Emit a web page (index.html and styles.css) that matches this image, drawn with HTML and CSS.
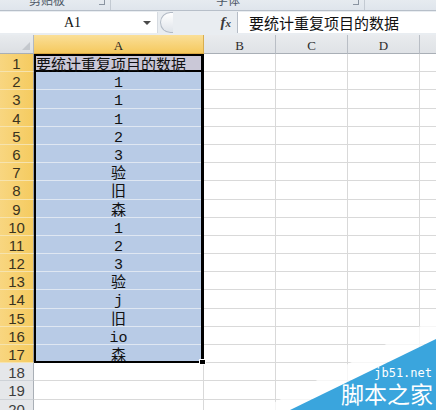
FILE: index.html
```html
<!DOCTYPE html>
<html>
<head>
<meta charset="utf-8">
<link rel="stylesheet" href="styles.css">
</head>
<body>
<div class="app">
  <div class="ribbon">
    <div class="rgroup g1"><span class="rlabel">剪贴板</span><span class="launch"></span></div>
    <div class="rgroup g2"><span class="rlabel">字体</span><span class="launch"></span></div>
    <div class="rgroup g3"></div>
  </div>
  <div class="fbar">
    <div class="namebox"><span class="nm">A1</span><span class="dd"></span></div>
    <div class="knob"></div>
    <div class="fxarea"><span class="fx">f<span class="fxx">x</span></span></div>
    <div class="finput">要统计重复项目的数据</div>
  </div>
  <div class="sheet">
    <div class="corner"><span class="tri"></span></div><div class="ch hs">A</div><div class="ch">B</div><div class="ch">C</div><div class="ch">D</div><div class="ch last"></div>

    <div class="rh hs">1</div><div class="c a1">要统计重复项目的数据</div><div class="c"></div><div class="c"></div><div class="c"></div><div class="c last"></div>
    <div class="rh hs">2</div><div class="c s">1</div><div class="c"></div><div class="c"></div><div class="c"></div><div class="c last"></div>
    <div class="rh hs">3</div><div class="c s">1</div><div class="c"></div><div class="c"></div><div class="c"></div><div class="c last"></div>
    <div class="rh hs">4</div><div class="c s">1</div><div class="c"></div><div class="c"></div><div class="c"></div><div class="c last"></div>
    <div class="rh hs">5</div><div class="c s">2</div><div class="c"></div><div class="c"></div><div class="c"></div><div class="c last"></div>
    <div class="rh hs">6</div><div class="c s">3</div><div class="c"></div><div class="c"></div><div class="c"></div><div class="c last"></div>
    <div class="rh hs">7</div><div class="c s">验</div><div class="c"></div><div class="c"></div><div class="c"></div><div class="c last"></div>
    <div class="rh hs">8</div><div class="c s">旧</div><div class="c"></div><div class="c"></div><div class="c"></div><div class="c last"></div>
    <div class="rh hs">9</div><div class="c s">森</div><div class="c"></div><div class="c"></div><div class="c"></div><div class="c last"></div>
    <div class="rh hs">10</div><div class="c s">1</div><div class="c"></div><div class="c"></div><div class="c"></div><div class="c last"></div>
    <div class="rh hs">11</div><div class="c s">2</div><div class="c"></div><div class="c"></div><div class="c"></div><div class="c last"></div>
    <div class="rh hs">12</div><div class="c s">3</div><div class="c"></div><div class="c"></div><div class="c"></div><div class="c last"></div>
    <div class="rh hs">13</div><div class="c s">验</div><div class="c"></div><div class="c"></div><div class="c"></div><div class="c last"></div>
    <div class="rh hs">14</div><div class="c s">j</div><div class="c"></div><div class="c"></div><div class="c"></div><div class="c last"></div>
    <div class="rh hs">15</div><div class="c s">旧</div><div class="c"></div><div class="c"></div><div class="c"></div><div class="c last"></div>
    <div class="rh hs">16</div><div class="c s">io</div><div class="c"></div><div class="c"></div><div class="c"></div><div class="c last"></div>
    <div class="rh hs">17</div><div class="c s">森</div><div class="c"></div><div class="c"></div><div class="c"></div><div class="c last"></div>
    <div class="rh">18</div><div class="c"></div><div class="c"></div><div class="c"></div><div class="c"></div><div class="c last"></div>
    <div class="rh">19</div><div class="c"></div><div class="c"></div><div class="c"></div><div class="c"></div><div class="c last"></div>
    <div class="rh">20</div><div class="c"></div><div class="c"></div><div class="c"></div><div class="c"></div><div class="c last"></div>

    <div class="selbox"><span class="handle"></span></div>
  </div>

  <div class="wm">
    <svg class="wmsvg" width="200" height="100" viewBox="0 0 200 100">
      <polygon points="24,100 54,100 200,29 200,8" fill="#ffffff" fill-opacity="0.75"/>
      <polygon points="54,100 200,100 200,29" fill="#3aa5dd"/>
    </svg>
    <span class="wm1">jb51.net</span>
    <span class="wm2">脚本之家</span>
  </div>
</div>
</body>
</html>
```

FILE: styles.css
```css
* {
  box-sizing: border-box;
  margin: 0;
  padding: 0;
}

body {
  margin: 0;
  width: 436px;
  height: 410px;
  overflow: hidden;
  background: #ffffff;
  font-family: "Liberation Sans", "Noto Sans CJK SC", sans-serif;
}

.app {
  position: relative;
  width: 436px;
  height: 410px;
  overflow: hidden;
}

/* ribbon strip (cut-off group labels) */
.ribbon {
  display: flex;
  height: 11px;
  background: linear-gradient(#e6ebf0, #dfe5ec);
  border-bottom: 1px solid #b7bfc9;
  overflow: hidden;
}

.rgroup {
  display: flex;
  align-items: flex-start;
  height: 10px;
  border-right: 1px solid #c3cad2;
  overflow: hidden;
}

.g1 {
  width: 111px;
  padding-left: 29px;
  padding-right: 5px;
}

.g2 {
  width: 254px;
  padding-left: 105px;
  padding-right: 5px;
}

.g3 {
  flex: 1;
  border-right: none;
}

.rlabel {
  font-family: "Noto Sans CJK SC", sans-serif;
  font-size: 12px;
  line-height: 12px;
  color: #4e5866;
  margin-top: -6px;
}

.launch {
  margin-left: auto;
  width: 6px;
  height: 5px;
  border-right: 1px solid #8a94a1;
  border-bottom: 1px solid #8a94a1;
}

/* formula bar */
.fbar {
  display: flex;
  height: 24px;
  padding: 1px 0 2px;
  background: #e9edf1;
}

.namebox {
  display: flex;
  align-items: center;
  width: 158px;
  background: #ffffff;
  border-right: 1px solid #d6dbe1;
}

.nm {
  flex: 1;
  text-align: center;
  font-family: "Liberation Serif", serif;
  font-size: 14px;
  color: #111111;
  padding-left: 2px;
}

.dd {
  width: 0;
  height: 0;
  margin-right: 6px;
  border-left: 4px solid transparent;
  border-right: 4px solid transparent;
  border-top: 4px solid #4a4a4a;
}

.knob {
  width: 13px;
  margin-left: 2px;
  border: 1px solid #b2bac5;
  border-right: none;
  border-radius: 11px 0 0 11px;
  background: linear-gradient(#ffffff, #dfe4ea);
}

.fxarea {
  display: flex;
  align-items: center;
  justify-content: flex-end;
  width: 65px;
  padding-right: 6px;
  border-right: 1px solid #b5bcc6;
}

.fx {
  font-family: "Liberation Serif", serif;
  font-style: italic;
  font-weight: bold;
  font-size: 15px;
  color: #3a3a3a;
}

.fxx {
  font-size: 11px;
}

.finput {
  flex: 1;
  background: #ffffff;
  font-family: "Noto Sans CJK SC", sans-serif;
  font-size: 15px;
  line-height: 21px;
  color: #111111;
  padding-left: 11px;
  white-space: nowrap;
}

/* sheet grid */
.sheet {
  position: relative;
  display: grid;
  grid-template-columns: 34px 170px 72px 72px 72px 16px;
  grid-template-rows: 19px repeat(20, 18.2px);
}

.corner {
  display: flex;
  align-items: flex-end;
  justify-content: flex-end;
  padding: 0 3px 3px 0;
  background: linear-gradient(#e8ebee, #dcdfe3);
  border-right: 1px solid #b3b9c0;
  border-bottom: 1px solid #a9afb6;
}

.tri {
  width: 0;
  height: 0;
  border-left: 8px solid transparent;
  border-bottom: 8px solid #c4c8cd;
}

.ch {
  text-align: center;
  font-family: "Liberation Serif", serif;
  font-size: 13px;
  line-height: 17px;
  padding-top: 2px;
  color: #2c2c2c;
  background: linear-gradient(#e9ebee, #dfe2e6);
  border-right: 1px solid #b9bec5;
  border-bottom: 1px solid #a9afb6;
}

.ch.hs {
  background: linear-gradient(#fadf98, #f5c95e);
  border-right: 1px solid #d8ae4f;
  border-bottom: 1px solid #d9a944;
  color: #1f1f1f;
}

.ch.last {
  border-right: none;
}

.rh {
  text-align: center;
  font-family: "Liberation Sans", sans-serif;
  font-size: 15px;
  line-height: 17px;
  padding-top: 1px;
  color: #3d3d3d;
  background: #e5e7ea;
  border-right: 1px solid #a9afb6;
  border-bottom: 1px solid #ced2d7;
}

.rh.hs {
  background: linear-gradient(90deg, #f8d680, #f5cb60);
  border-bottom: 1px solid #f6e3ae;
  border-right: 1px solid #9d9d9d;
  color: #3a3320;
}

.c {
  text-align: center;
  font-family: "Liberation Mono", "Noto Sans CJK SC", monospace;
  font-size: 15px;
  line-height: 17px;
  padding-top: 3px;
  color: #111111;
  white-space: nowrap;
  border-right: 1px solid #d9d9d9;
  border-bottom: 1px solid #d9d9d9;
}

.c.last {
  border-right: none;
}

.c.s {
  background: #b8cbe6;
  border-bottom: 1px solid #dfe7f2;
}

.c.a1 {
  text-align: left;
  padding-left: 2px;
  font-family: "Noto Sans CJK SC", sans-serif;
  background: #cac8d7;
  border-bottom: 2px solid #000000;
  padding-top: 1px;
}

/* selection outline: absolutely positioned on grid lines, does not take a grid slot */
.selbox {
  position: absolute;
  top: 0;
  bottom: 0;
  left: 0;
  right: 0;
  grid-column: 2 / 3;
  grid-row: 2 / 19;
  border: 2px solid #000000;
  border-right-width: 3px;
  pointer-events: none;
  z-index: 2;
}

.handle {
  position: absolute;
  right: -5px;
  bottom: -4px;
  width: 7px;
  height: 6px;
  background: #000000;
  border: 1px solid #ffffff;
}

/* watermark */
.wm {
  position: absolute;
  right: 0;
  bottom: 0;
  width: 200px;
  height: 100px;
  z-index: 5;
}

.wmsvg {
  display: block;
}

.wm1 {
  position: absolute;
  right: 4px;
  top: 56px;
  font-family: "DejaVu Sans Mono", monospace;
  font-size: 12px;
  line-height: 14px;
  color: #ffffff;
}

.wm2 {
  position: absolute;
  right: 3px;
  top: 71px;
  font-family: "Noto Sans CJK SC", sans-serif;
  font-size: 23px;
  line-height: 24px;
  color: #ffffff;
}
```
